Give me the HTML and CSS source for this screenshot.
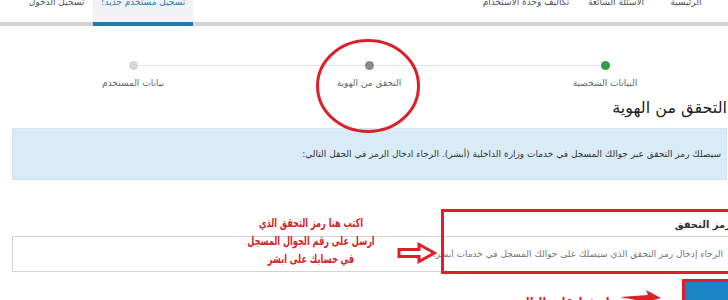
FILE: index.html
```html
<!DOCTYPE html>
<html lang="ar" dir="rtl">
<head>
<meta charset="utf-8">
<title>التحقق من الهوية</title>
<link rel="stylesheet" href="styles.css">
</head>
<body>
<header class="topbar">
  <nav class="nav">
    <ul class="nav-main">
      <li class="nav-item nav-home"><a class="nav-link">الرئيسية</a></li>
      <li class="nav-item nav-faq"><a class="nav-link">الاسئلة الشائعة</a></li>
      <li class="nav-item nav-cost"><a class="nav-link">تكاليف وحدة الاستخدام</a></li>
    </ul>
    <ul class="nav-account">
      <li class="nav-item nav-tab active"><a class="nav-link">تسجيل مستخدم جديد!</a></li>
      <li class="nav-item nav-login"><a class="nav-link">تسجيل الدخول</a></li>
    </ul>
  </nav>
</header>
<main class="page">
  <ol class="stepper">
    <li class="step done"><span class="dot"></span><span class="step-label">البيانات الشخصية</span></li>
    <li class="step current"><span class="dot"></span><span class="step-label">التحقق من الهوية</span></li>
    <li class="step"><span class="dot"></span><span class="step-label">بيانات المستخدم</span></li>
  </ol>
  <h1 class="title">التحقق من الهوية</h1>
  <div class="alert">سيصلك رمز التحقق عبر جوالك المسجل في خدمات وزارة الداخلية (أبشر). الرجاء ادخال الرمز في الحقل التالي:</div>
  <form class="form">
    <label class="form-label" for="code">رمز التحقق</label>
    <input class="form-input" id="code" type="text" placeholder="الرجاء إدخال رمز التحقق الذي سيصلك على جوالك المسجل في خدمات أبشر.">
    <div class="actions"><button class="btn" type="button"></button></div>
  </form>

  <svg class="note-ellipse" width="106" height="96" viewBox="0 0 106 96"><ellipse cx="53" cy="48" rx="50.5" ry="45.5" fill="none" stroke="#dc1f28" stroke-width="3"/></svg>
  <div class="note-box note-field"></div>
  <svg class="note-arrow" width="40" height="22" viewBox="0 0 40 22"><path d="M2 7.5 H22 V2.5 L37.5 11 L22 19.5 V14.5 H2 Z" fill="#fff" stroke="#dc1f28" stroke-width="3" stroke-linejoin="miter"/></svg>
  <div class="note-text">اكتب هنا رمز التحقق الذي<br>ارسل على رقم الجوال المسجل<br>في حسابك على ابشر</div>
  <div class="note-box note-btn"></div>
  <svg class="note-arrow2" width="42" height="14" viewBox="0 0 42 14"><path d="M0 9 L28 7 L26 2 L41 10 L26 14 Z" fill="#dc1f28"/></svg>
  <div class="note-text2">ثم اضغط على التالي</div>
</main>
</body>
</html>
```
FILE: styles.css
```css
* { box-sizing: border-box; }
html, body { margin: 0; padding: 0; }
body {
  width: 728px;
  height: 300px;
  overflow: hidden;
  background: #fff;
  font-family: "DejaVu Sans", sans-serif;
  color: #333;
}
ul, ol { list-style: none; margin: 0; padding: 0; }

.topbar { margin-top: -14px; }
.nav {
  display: flex;
  height: 40px;
  border-bottom: 4px solid #d4d4d4;
  padding-right: 16px;
  padding-left: 30px;
}
.nav-main, .nav-account { display: flex; }
.nav-account { margin-right: auto; gap: 10px; }
.nav-item { display: flex; justify-content: center; }
.nav-home { width: 52px; }
.nav-faq { width: 88px; }
.nav-cost { width: 92px; }
.nav-link {
  font-size: 9px;
  line-height: 14px;
  padding-top: 9px;
  color: #555;
  white-space: nowrap;
}
.nav-tab {
  width: 100px;
  background: #f1f2f4;
  margin-bottom: -4px;
  border-bottom: 4px solid #1b7db3;
}
.nav-tab .nav-link { color: #2a7fb8; }
.nav-login { width: 53px; }

.page { position: relative; height: 274px; overflow: hidden; }

.stepper {
  position: relative;
  display: grid;
  grid-template-columns: repeat(3, 236px);
  margin: 0 5px 0 15px;
  padding-top: 35px;
}
.stepper::before {
  content: "";
  position: absolute;
  top: 39px;
  right: 118px;
  left: 118px;
  border-top: 1px solid #e2e2e2;
}
.step {
  position: relative;
  display: flex;
  flex-direction: column;
  align-items: center;
}
.dot {
  width: 9px;
  height: 9px;
  border-radius: 50%;
  background: #d6d6d6;
}
.done .dot { background: #2f9e44; }
.current .dot { background: #8a8a8a; }
.step-label {
  margin-top: 6px;
  font-size: 9px;
  line-height: 14px;
  color: #666;
  white-space: nowrap;
}

.title {
  margin: 4px 1px 0 0;
  font-size: 16px;
  line-height: 28px;
  font-weight: normal;
  color: #222;
}

.alert {
  margin: 6px 1px 0 12px;
  height: 52px;
  padding: 0 5px;
  display: flex;
  align-items: center;
  background: #d9ebf6;
  border: 1px solid #cfe4f1;
  font-size: 9px;
  color: #333;
  white-space: nowrap;
}

.form { margin: 35px -4px 0 12px; }
.form-label {
  display: block;
  margin-right: 1px;
  padding-top: 2px;
  font-size: 10px;
  line-height: 16px;
  font-weight: bold;
  color: #333;
}
.form-input {
  display: block;
  width: 100%;
  height: 36px;
  margin-top: 3px;
  padding: 0 8px;
  border: 1px solid #d2d2d2;
  font-family: inherit;
  font-size: 9px;
  color: #333;
  direction: rtl;
}
.form-input::placeholder { color: #777; }
.actions { margin-top: 8px; display: flex; }
.btn {
  width: 50px;
  height: 34px;
  border: 0;
  background: #1a85c2;
}

.note-ellipse { position: absolute; left: 315px; top: 12px; }
.note-box { position: absolute; border: 3px solid #dc1f28; }
.note-field { left: 441px; top: 183px; width: 292px; height: 65px; }
.note-btn { left: 682px; top: 253px; width: 52px; height: 40px; }
.note-arrow { position: absolute; left: 397px; top: 216px; }
.note-text {
  position: absolute;
  left: 213px;
  top: 188px;
  width: 196px;
  text-align: center;
  font-weight: bold;
  font-size: 12px;
  line-height: 18px;
  color: #d81e28;
  white-space: nowrap;
  transform: scaleX(0.68);
}
.note-arrow2 { position: absolute; left: 620px; top: 262px; }
.note-text2 {
  position: absolute;
  left: 540px;
  top: 269px;
  width: 86px;
  text-align: center;
  font-weight: bold;
  font-size: 11px;
  color: #d81e28;
  white-space: nowrap;
}
```
